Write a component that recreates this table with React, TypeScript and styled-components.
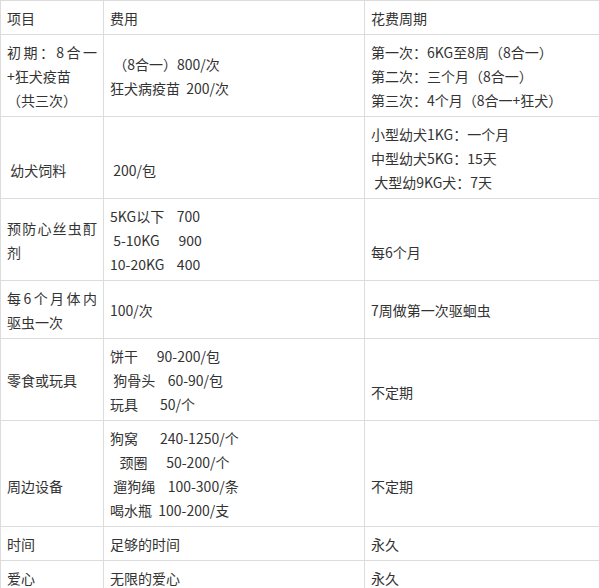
import styled, { createGlobalStyle } from "styled-components";

const GlobalStyle = createGlobalStyle`
  html, body {
    margin: 0;
    padding: 0;
    background: #fff;
  }
  body {
    font-family: "Noto Sans CJK SC", "Noto Sans", sans-serif;
    overflow: hidden;
  }
`;

// a line starting with "|" is stretched across the cell (justified);
// an empty string keeps a blank line
const rows: string[][][] = [
  [["|初期：8合一", "+狂犬疫苗", "（共三次）"], [" （8合一）800/次", "狂犬病疫苗  200/次"], ["第一次：6KG至8周（8合一）", "第二次：三个月（8合一）", "第三次：4个月（8合一+狂犬）"]],
  [["", " 幼犬饲料"], ["", " 200/包"], ["小型幼犬1KG：一个月", "中型幼犬5KG：15天", " 大型幼9KG犬：7天"]],
  [["|预防心丝虫酊", "剂"], ["5KG以下    700", " 5-10KG      900", "10-20KG    400"], ["", "每6个月"]],
  [["|每6个月体内", "驱虫一次"], ["100/次"], ["7周做第一次驱蛔虫"]],
  [["零食或玩具"], ["饼干      90-200/包", " 狗骨头    60-90/包", "玩具       50/个"], ["", "不定期"]],
  [["", "周边设备"], ["狗窝       240-1250/个", "   颈圈      50-200/个", " 遛狗绳    100-300/条", "喝水瓶  100-200/支"], ["", "不定期"]],
  [["时间"], ["足够的时间"], ["永久"]],
  [["爱心"], ["无限的爱心"], ["永久"]],
];

const head = ["项目", "费用", "花费周期"];

export default function App() {
  return (
    <>
      <GlobalStyle />
      <Page>
        <Table>
          {head.map((h, i) => (
            <Cell key={"h" + i}>
              <Line>{h}</Line>
            </Cell>
          ))}
          {rows.map((row, r) =>
            row.map((lines, c) => (
              <Cell key={r + "-" + c}>
                {lines.map((l, k) =>
                  l.startsWith("|") ? (
                    <Line key={k} $justify>
                      {l.slice(1)}
                    </Line>
                  ) : (
                    <Line key={k}>{l}</Line>
                  )
                )}
              </Cell>
            ))
          )}
        </Table>
      </Page>
    </>
  );
}

const Page = styled.div`
  width: 599px;
  height: 588px;
  overflow: hidden;
`;

const Table = styled.div`
  display: grid;
  grid-template-columns: 103px 261px 300px;
  width: 664px;
  border-top: 1px solid #dcdcdc;
  border-left: 1px solid #dcdcdc;
  color: #333;
  font-size: 14px;
`;

const Cell = styled.div`
  display: flex;
  flex-direction: column;
  justify-content: center;
  padding: 5px 6px 4px;
  border-right: 1px solid #dcdcdc;
  border-bottom: 1px solid #dcdcdc;
`;

const Line = styled.div<{ $justify?: boolean }>`
  line-height: 24px;
  min-height: 24px;
  white-space: ${(p) => (p.$justify ? "normal" : "pre")};
  text-align: ${(p) => (p.$justify ? "justify" : "left")};
  text-align-last: ${(p) => (p.$justify ? "justify" : "auto")};
`;
